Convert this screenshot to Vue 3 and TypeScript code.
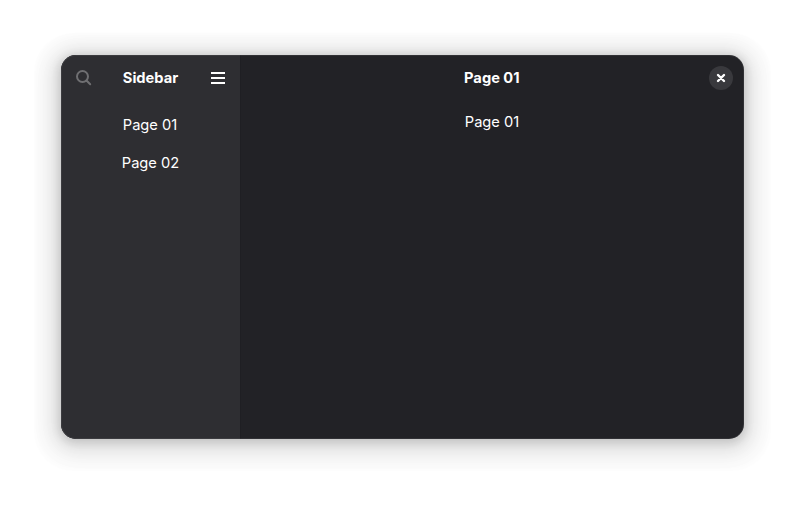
<script setup lang="ts">
import { ref } from 'vue'

const pages: string[] = ['Page 01', 'Page 02']
const current = ref<string>('Page 01')
</script>

<template>
  <main class="desktop">
    <section class="window">
      <aside class="sidebar">
        <header class="bar">
          <button class="icon search" aria-label="Search">
            <svg width="16" height="16" viewBox="0 0 16 16"><circle cx="6.5" cy="6.5" r="5.5" /><path d="M10.5 10.5L14.2 14.2" /></svg>
          </button>
          <h1>Sidebar</h1>
          <button class="icon menu" aria-label="Menu">
            <svg width="16" height="16" viewBox="0 0 16 16"><path class="flat" d="M1 3H15M1 8H15M1 13H15" /></svg>
          </button>
        </header>
        <nav>
          <button v-for="page in pages" :key="page" class="item" @click="current = page">{{ page }}</button>
        </nav>
      </aside>
      <article class="content">
        <header class="bar">
          <span></span>
          <h1>{{ current }}</h1>
          <button class="close" aria-label="Close">
            <svg width="16" height="16" viewBox="0 0 16 16"><path d="M5 5L11 11M11 5L5 11" /></svg>
          </button>
        </header>
        <p>{{ current }}</p>
      </article>
    </section>
  </main>
</template>

<style>
body { background: #fff; }
</style>

<style scoped>
.desktop { box-sizing: border-box; width: 805px; height: 506px; padding: 55px 61px 67px; font: 15px/20px Inter, sans-serif; color: #fff; overflow: hidden; }
.window { position: relative; display: flex; width: 683px; height: 384px; border-radius: 15px; overflow: hidden; background: #222226; box-shadow: 0 2px 8px 2px rgba(0,0,0,.12), 0 3px 20px 9px rgba(0,0,0,.1), 0 6px 20px 14px rgba(0,0,0,.025), 0 5px 2px 27px rgba(0,0,0,.012); }
.window::after { content: ''; position: absolute; inset: 0; border-radius: inherit; box-shadow: inset 0 0 0 1px rgba(255,255,255,.07); pointer-events: none; }
.sidebar { box-sizing: border-box; width: 180px; background: #2e2e32; border-right: 1px solid #1f1f23; }
.content { flex: 1; }
.bar { display: grid; grid-template-columns: 34px 1fr 34px; align-items: center; height: 46px; padding: 0 6px; }
h1 { margin: 0; font-size: 14.67px; line-height: 20px; font-weight: 700; text-align: center; }
button { padding: 0; border: 0; background: none; color: inherit; font: inherit; }
.icon { display: grid; place-items: center; width: 34px; height: 34px; }
.menu { margin-left: 1px; }
.search { opacity: .31; }
.search svg { margin-bottom: 1px; }
svg { display: block; fill: none; stroke: currentColor; stroke-width: 2; stroke-linecap: round; }
.flat { stroke-linecap: butt; }
.close { display: grid; place-items: center; width: 24px; height: 24px; border-radius: 50%; background: #39393d; justify-self: center; }
.close svg { stroke-width: 2.4; }
nav { display: grid; padding-top: 5px; }
.item { height: 38px; font-size: 14.67px; text-align: center; }
.item:first-child { padding-right: 1px; }
.content h1 { margin-right: 1.4px; }
p { margin: 11px 1px 0 0; font-size: 14.67px; text-align: center; }
</style>
